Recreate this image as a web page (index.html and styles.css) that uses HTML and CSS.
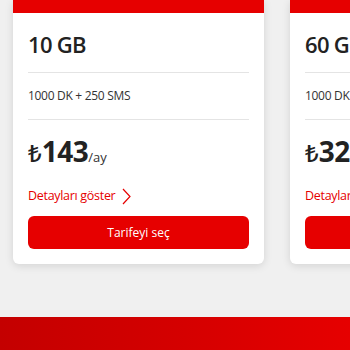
FILE: index.html
```html
<!DOCTYPE html>
<html lang="tr">
<head>
<meta charset="utf-8">
<link rel="stylesheet" href="styles.css">
</head>
<body>
<div class="page">
  <div class="cards">
    <div class="card">
      <div class="card-top"></div>
      <div class="card-body">
        <div class="title">10 GB</div>
        <div class="features">1000 DK + 250 SMS</div>
        <div class="price"><span class="cur">₺</span><span class="amount">143</span><span class="per">/ay</span></div>
        <a class="details">Detayları göster
          <svg class="chev" width="9" height="17" viewBox="0 0 9 17"><path d="M1 1 L8 8.5 L1 16" fill="none" stroke="#e60000" stroke-width="1.2"/></svg>
        </a>
        <button class="select">Tarifeyi seç</button>
      </div>
    </div>
    <div class="card">
      <div class="card-top"></div>
      <div class="card-body">
        <div class="title">60 GB</div>
        <div class="features">1000 DK + 250 SMS</div>
        <div class="price"><span class="cur">₺</span><span class="amount">325</span><span class="per">/ay</span></div>
        <a class="details">Detayları göster
          <svg class="chev" width="9" height="17" viewBox="0 0 9 17"><path d="M1 1 L8 8.5 L1 16" fill="none" stroke="#e60000" stroke-width="1.2"/></svg>
        </a>
        <button class="select">Tarifeyi seç</button>
      </div>
    </div>
  </div>
  <div class="band"></div>
</div>
</body>
</html>
```
FILE: styles.css
```css
html, body {
  margin: 0;
  padding: 0;
  background: #f0f0f0;
  font-family: "Open Sans", "Noto Sans", sans-serif;
  color: #222;
  overflow: hidden;
}
.page {
  width: 350px;
  height: 350px;
  display: flex;
  flex-direction: column;
}
.cards {
  display: flex;
  gap: 26px;
  padding-left: 13px;
  height: 317px;
  overflow: hidden;
  flex-shrink: 0;
}
.card {
  width: 251px;
  flex-shrink: 0;
  height: 264px;
  background: #fff;
  border-radius: 0 0 6px 6px;
  box-shadow: 0 2px 8px rgba(0, 0, 0, 0.12);
  display: flex;
  flex-direction: column;
}
.card-top {
  height: 13px;
  background: #e60000;
}
.card-body {
  padding: 0 15px;
  display: flex;
  flex-direction: column;
}
.title {
  font-size: 22px;
  font-weight: 600;
  letter-spacing: -0.7px;
  line-height: 30px;
  margin-top: 16px;
  padding-bottom: 13px;
  border-bottom: 1.5px solid #e4e4e4;
}
.features {
  font-size: 12px;
  line-height: 18px;
  padding: 14px 0 14px;
  border-bottom: 1.5px solid #e4e4e4;
  letter-spacing: -0.3px;
  color: #333;
}
.price {
  margin-top: 14px;
  display: flex;
  align-items: baseline;
  line-height: 34px;
}
.cur {
  font-size: 24px;
  font-weight: 500;
}
.amount {
  font-size: 28px;
  font-weight: 700;
  letter-spacing: -0.5px;
}
.per {
  font-size: 13px;
  color: #333;
}
.details {
  margin-top: 13px;
  font-size: 12.5px;
  color: #e60000;
  display: flex;
  align-items: center;
  gap: 7px;
  line-height: 18px;
  letter-spacing: -0.3px;
}
.select {
  margin-top: 11px;
  height: 33px;
  border: none;
  border-radius: 6px;
  background: #e60000;
  color: #fff;
  font-family: "Open Sans", "Noto Sans", sans-serif;
  font-size: 12px;
  width: 221px;
  padding: 0;
}
.band {
  flex: 1;
  background: linear-gradient(90deg, #c40000 0%, #d40000 50%, #e60000 100%);
}
```
